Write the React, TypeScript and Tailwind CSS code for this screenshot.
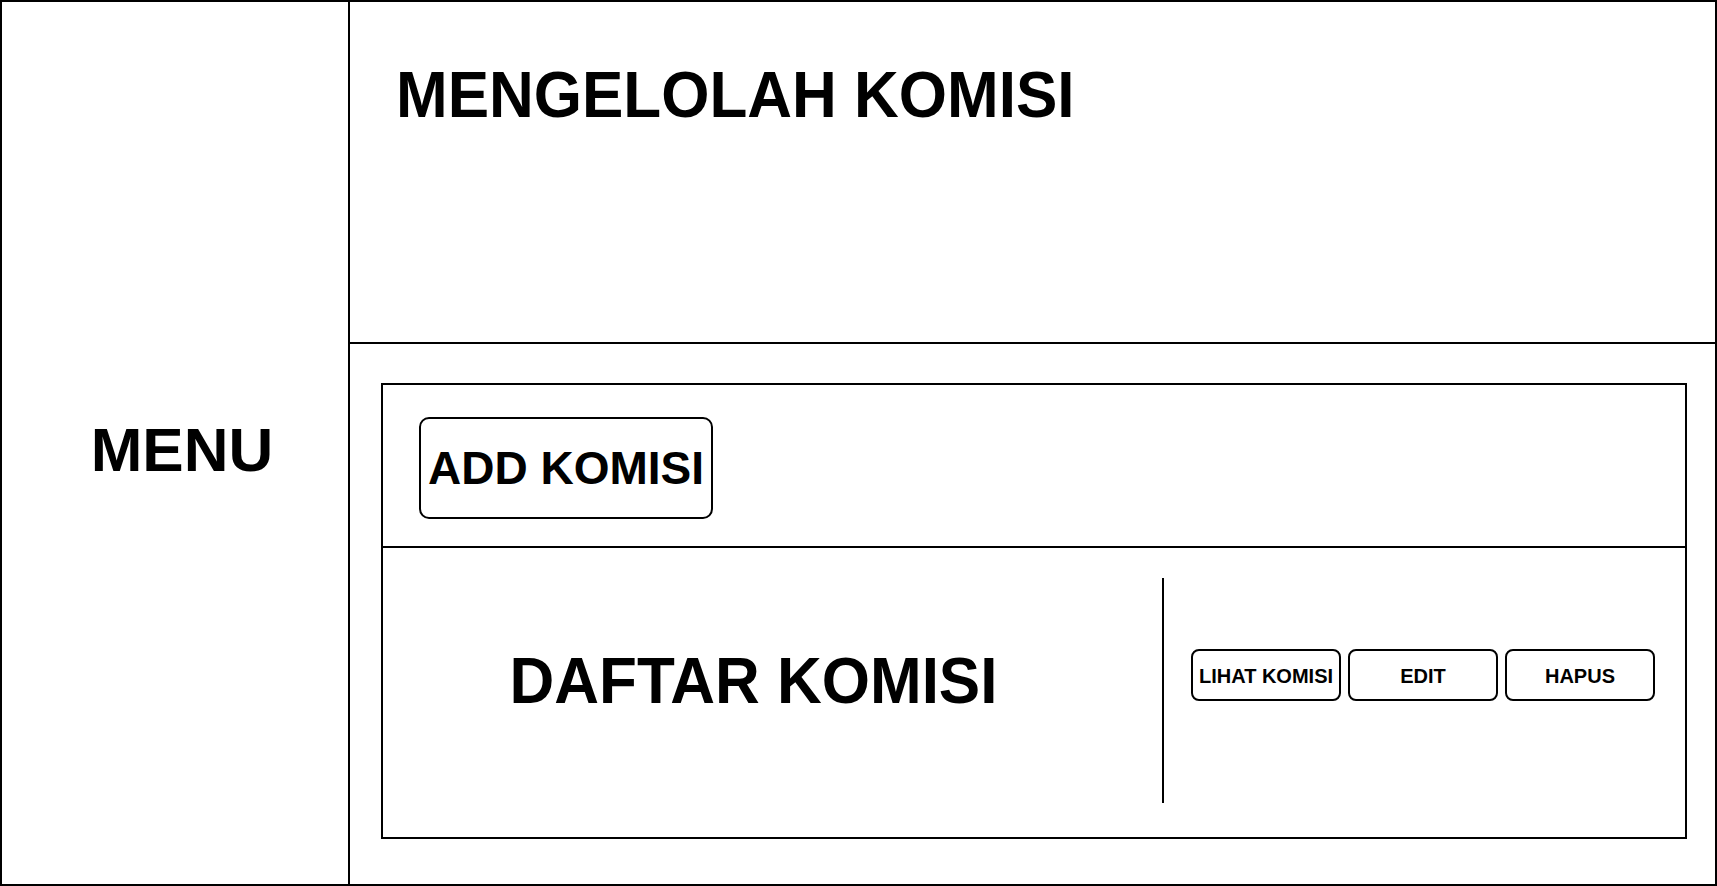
const font = { fontFamily: '"Liberation Sans", Arial, sans-serif' };

const ActionButton = ({ label }: { label: string }) => (
  <div className="w-[150px] h-[52px] border-2 border-black rounded-[8px] flex items-center justify-center pt-[2px] text-[20px] font-bold leading-none text-black">
    {label}
  </div>
);

export default function App() {
  return (
    <div
      className="w-[1717px] h-[886px] border-2 border-black bg-white flex text-black"
      style={font}
    >
      {/* Sidebar */}
      <div className="w-[348px] h-full border-r-2 border-black flex items-center justify-center pl-[14px] pt-[14px]">
        <span className="text-[62px] font-bold leading-none">MENU</span>
      </div>

      {/* Main */}
      <div className="flex-1 flex flex-col">
        <div className="h-[342px] border-b-2 border-black pl-[46px] pt-[62px]">
          <h1 className="inline-block text-[62px] font-bold leading-none scale-y-[1.05]">MENGELOLAH KOMISI</h1>
        </div>

        <div className="flex-1 pl-[31px] pt-[39px] pr-[28px] pb-[45px] flex">
          <div className="flex-1 border-2 border-black flex flex-col">
            {/* Add section */}
            <div className="h-[163px] border-b-2 border-black pl-[36px] pt-[32px]">
              <div className="w-[294px] h-[102px] border-2 border-black rounded-[10px] flex items-center justify-center">
                <span className="text-[46px] font-bold leading-none">ADD KOMISI</span>
              </div>
            </div>

            {/* List section */}
            <div className="flex-1 flex">
              <div className="w-[779px] flex items-center justify-center pr-[38px] pb-[24px]">
                <span className="inline-block text-[62px] font-bold leading-none scale-y-[1.05]">DAFTAR KOMISI</span>
              </div>
              <div className="w-[2px] h-[225px] mt-[30px] bg-black" />
              <div className="flex gap-[7px] ml-[27px] mt-[101px] self-start">
                <ActionButton label="LIHAT KOMISI" />
                <ActionButton label="EDIT" />
                <ActionButton label="HAPUS" />
              </div>
            </div>
          </div>
        </div>
      </div>
    </div>
  );
}
